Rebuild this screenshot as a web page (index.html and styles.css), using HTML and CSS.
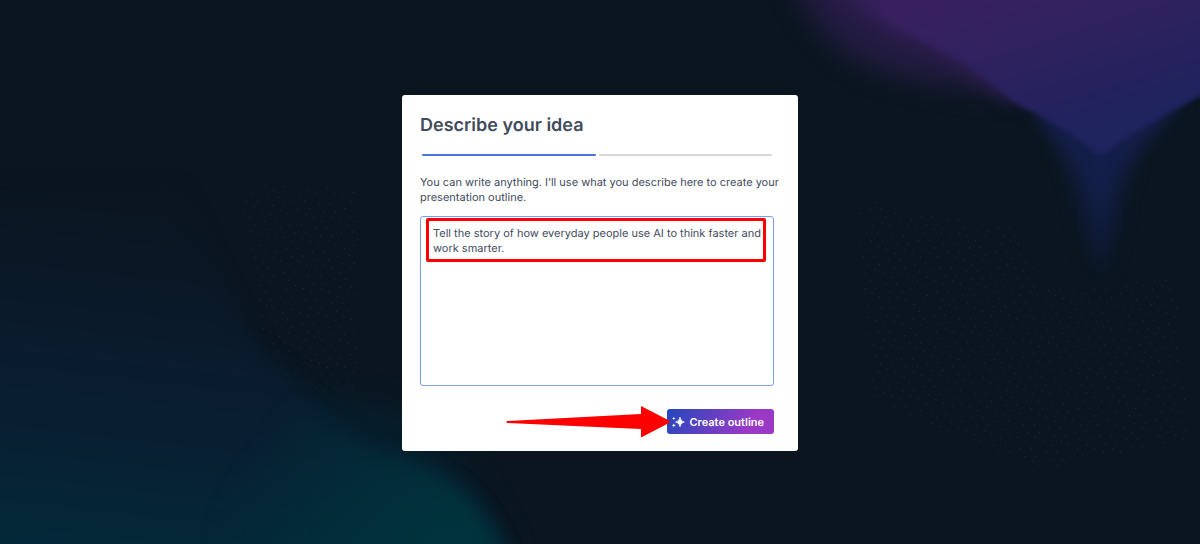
FILE: index.html
```html
<!DOCTYPE html>
<html lang="en">
<head>
    <meta charset="UTF-8">
    <meta name="viewport" content="width=device-width, initial-scale=1.0">
    <title>Describe your idea</title>
    <link rel="stylesheet" href="styles.css">
</head>
<body>
    <!-- Backdrop -->
    <svg class="backdrop" viewBox="0 0 1200 544" preserveAspectRatio="xMidYMid slice" aria-hidden="true">
        <defs>
            <linearGradient id="violet" gradientUnits="userSpaceOnUse" x1="940" y1="0" x2="990" y2="160">
                <stop offset="0" stop-color="#38205e"/>
                <stop offset="0.4" stop-color="#2f225e"/>
                <stop offset="1" stop-color="#1f235e"/>
            </linearGradient>
            <linearGradient id="violet-fade" gradientUnits="userSpaceOnUse" x1="785" y1="0" x2="890" y2="0">
                <stop offset="0" stop-color="#fff" stop-opacity="0"/>
                <stop offset="1" stop-color="#fff"/>
            </linearGradient>
            <mask id="violet-mask">
                <rect x="780" y="0" width="420" height="200" fill="url(#violet-fade)"/>
            </mask>
            <linearGradient id="beam" gradientUnits="userSpaceOnUse" x1="0" y1="110" x2="0" y2="275">
                <stop offset="0" stop-color="#1c235f"/>
                <stop offset="0.3" stop-color="#15204e"/>
                <stop offset="0.6" stop-color="#101d3e"/>
                <stop offset="1" stop-color="#0b1829"/>
            </linearGradient>
            <linearGradient id="sea" gradientUnits="userSpaceOnUse" x1="180" y1="210" x2="140" y2="560">
                <stop offset="0" stop-color="#0a1520"/>
                <stop offset="0.35" stop-color="#0a1a2b"/>
                <stop offset="0.65" stop-color="#081f32"/>
                <stop offset="1" stop-color="#032939"/>
            </linearGradient>
            <radialGradient id="teal" gradientUnits="userSpaceOnUse" cx="450" cy="550" r="240">
                <stop offset="0" stop-color="#00353e"/>
                <stop offset="1" stop-color="#00353e" stop-opacity="0"/>
            </radialGradient>
            <filter id="blur-s" color-interpolation-filters="sRGB" x="-20%" y="-20%" width="140%" height="140%"><feGaussianBlur stdDeviation="2"/></filter>
            <filter id="blur-m" color-interpolation-filters="sRGB" x="-50%" y="-50%" width="200%" height="200%"><feGaussianBlur stdDeviation="9"/></filter>
            <filter id="blur-l" color-interpolation-filters="sRGB" x="-50%" y="-50%" width="200%" height="200%"><feGaussianBlur stdDeviation="14"/></filter>
            <pattern id="dots" width="26" height="24" patternUnits="userSpaceOnUse" patternTransform="rotate(8)">
                <g fill="#222c36">
                    <rect x="2" y="3" width="1" height="1"/>
                    <rect x="11" y="6" width="1" height="1"/>
                    <rect x="20" y="1" width="1" height="1"/>
                    <rect x="6" y="14" width="1" height="1"/>
                    <rect x="17" y="12" width="1" height="1"/>
                    <rect x="23" y="19" width="1" height="1"/>
                    <rect x="12" y="21" width="1" height="1"/>
                </g>
            </pattern>
        </defs>
        <rect width="1200" height="544" fill="#0a151f"/>

        <path d="M240 183 L360 190 L358 402 L290 384 L262 330 Z" fill="url(#dots)"/>
        <path d="M857 195 L935 215 L1010 222 L1045 290 L1175 275 L1190 440 L1040 470 L870 400 Z" fill="url(#dots)"/>

        <!-- Top right glow -->
        <path d="M785 -40 C805 25 840 62 900 76 C945 86 975 90 1015 94 L1000 -40 Z" fill="#281d48" opacity="0.85" filter="url(#blur-l)"/>
        <path d="M1030 105 Q1066 150 1077 200 Q1084 250 1101 285 Q1118 250 1122 200 Q1132 145 1185 100 Z" fill="url(#beam)" opacity="0.8" filter="url(#blur-m)"/>
        <path d="M1086 140 L1100 270 L1114 140 Z" fill="#152152" opacity="0.6" filter="url(#blur-m)"/>
        <g mask="url(#violet-mask)">
            <path d="M790 -40 Q860 25 925 44 C965 60 995 90 1015 102 L1100 60 L1100 -40 Z" fill="#35205c" filter="url(#blur-m)"/>
            <path d="M830 -30 Q890 28 940 50 C978 68 1000 91 1020 106 Q1060 124 1090 148 Q1101 160 1112 148 Q1140 127 1215 89 L1215 -30 Z" fill="url(#violet)" filter="url(#blur-s)"/>
        </g>

        <!-- Bottom left glow -->
        <path d="M240 350 L300 392 L390 405 Q480 450 525 600 L240 600 Z" fill="#06202e" opacity="0.8" filter="url(#blur-l)"/>
        <path d="M-40 190 L180 190 Q235 315 265 355 Q300 392 330 415 Q355 440 385 452 C460 475 495 510 520 600 L-40 600 Z" fill="url(#sea)" filter="url(#blur-m)"/>
        <path d="M300 398 Q325 430 385 452 C460 475 495 510 520 600 L150 600 Z" fill="url(#teal)" filter="url(#blur-m)"/>
    </svg>

    <main class="page">
        <form class="card">
            <h1>Describe your idea</h1>

            <div class="steps">
                <span class="step active"></span>
                <span class="step"></span>
            </div>

            <label for="idea">You can write anything. I’ll use what you describe here to create your presentation outline.</label>

            <div class="idea-box">
                <textarea id="idea" name="idea" spellcheck="false">Tell the story of how everyday people use AI to think faster and work smarter.</textarea>
                <span class="highlight"></span>
            </div>

            <div class="actions">
                <button type="button" class="create-btn">
                    <svg class="sparkle" viewBox="0 0 14 14" aria-hidden="true">
                        <path d="M9 2.2 Q9.500 6.300 13.400 7 Q9.500 7.700 9 11.800 Q8.500 7.700 4.600 7 Q8.500 6.300 9 2.200 Z" stroke-width="0.7"/>
                        <path d="M2.8 1.8 L3.300 3 L4.500 3.500 L3.300 4 L2.800 5.200 L2.300 4 L1.100 3.500 L2.300 3 Z"/>
                        <path d="M2.8 8.4 L3.400 9.800 L4.800 10.400 L3.400 11 L2.800 12.400 L2.200 11 L0.800 10.400 L2.200 9.800 Z"/>
                    </svg>
                    Create outline
                </button>
                <svg class="arrow" viewBox="0 0 164 32" aria-hidden="true">
                    <path d="M1 15 L135 8 V0.5 Q135 0 136 0.5 L163 14.5 Q164.5 16 163 17 L136 31 Q135 31.500 135 31 V23 L1 17 Q0 16 1 15 Z"/>
                </svg>
            </div>
        </form>
    </main>
</body>
</html>
```
FILE: styles.css
```css
* {
    box-sizing: border-box;
}
body {
    margin: 0;
    font-family: Inter, "Liberation Sans", sans-serif;
    text-rendering: geometricPrecision;
    background-color: #0a151f;
    color: #414b5c;
}
.backdrop {
    position: fixed;
    inset: 0;
    width: 100%;
    height: 100%;
}
.page {
    position: relative;
    display: flex;
    align-items: center;
    justify-content: center;
    min-height: 100vh;
    padding: 20px 18px 18px;
}
.card {
    width: 100%;
    max-width: 396px;
    padding: 19px 24px 17px 18px;
    background: #fff;
    border-radius: 3px;
}
h1 {
    margin: 0;
    font-size: 18px;
    line-height: 24px;
    font-weight: 600;
}
.steps {
    display: flex;
    gap: 3px;
    margin: 16px 2px 19px;
}
.step {
    flex: 1;
    height: 2px;
    border-radius: 1px;
    background: #d5d7dc;
}
.step.active {
    background: #4b73e0;
}
label {
    display: block;
    margin-right: -8px;
    font-size: 11px;
    line-height: 15px;
}
.idea-box {
    position: relative;
    margin-top: 11px;
}
textarea {
    display: block;
    width: 100%;
    height: 170px;
    padding: 9px 8px 9px 12px;
    border: 1px solid #7f9bee;
    border-radius: 3px;
    font: inherit;
    font-size: 11px;
    line-height: 15px;
    text-rendering: inherit;
    color: inherit;
    background: #fff;
    outline: none;
    resize: none;
}
.highlight {
    position: absolute;
    top: 2px;
    left: 6px;
    right: 8px;
    height: 44px;
    border: 3px solid #fe0000;
    border-radius: 2px;
    pointer-events: none;
}
.actions {
    position: relative;
    display: flex;
    justify-content: flex-end;
    margin-top: 23px;
}
.create-btn {
    display: flex;
    align-items: center;
    gap: 4px;
    height: 25px;
    padding: 0 10px 0 4px;
    border: none;
    border-radius: 3px;
    font: inherit;
    font-size: 11px;
    font-weight: 600;
    text-rendering: inherit;
    color: #fff;
    background: linear-gradient(120deg, #2148bd, #9a39c6 75%);
    cursor: pointer;
}
.sparkle {
    width: 14px;
    height: 14px;
    fill: #fff;
    stroke: #fff;
    stroke-width: 0;
    stroke-linejoin: round;
}
.arrow {
    position: absolute;
    top: -3px;
    right: 104px;
    width: 164px;
    height: 32px;
    fill: #fe0000;
    pointer-events: none;
}
```
